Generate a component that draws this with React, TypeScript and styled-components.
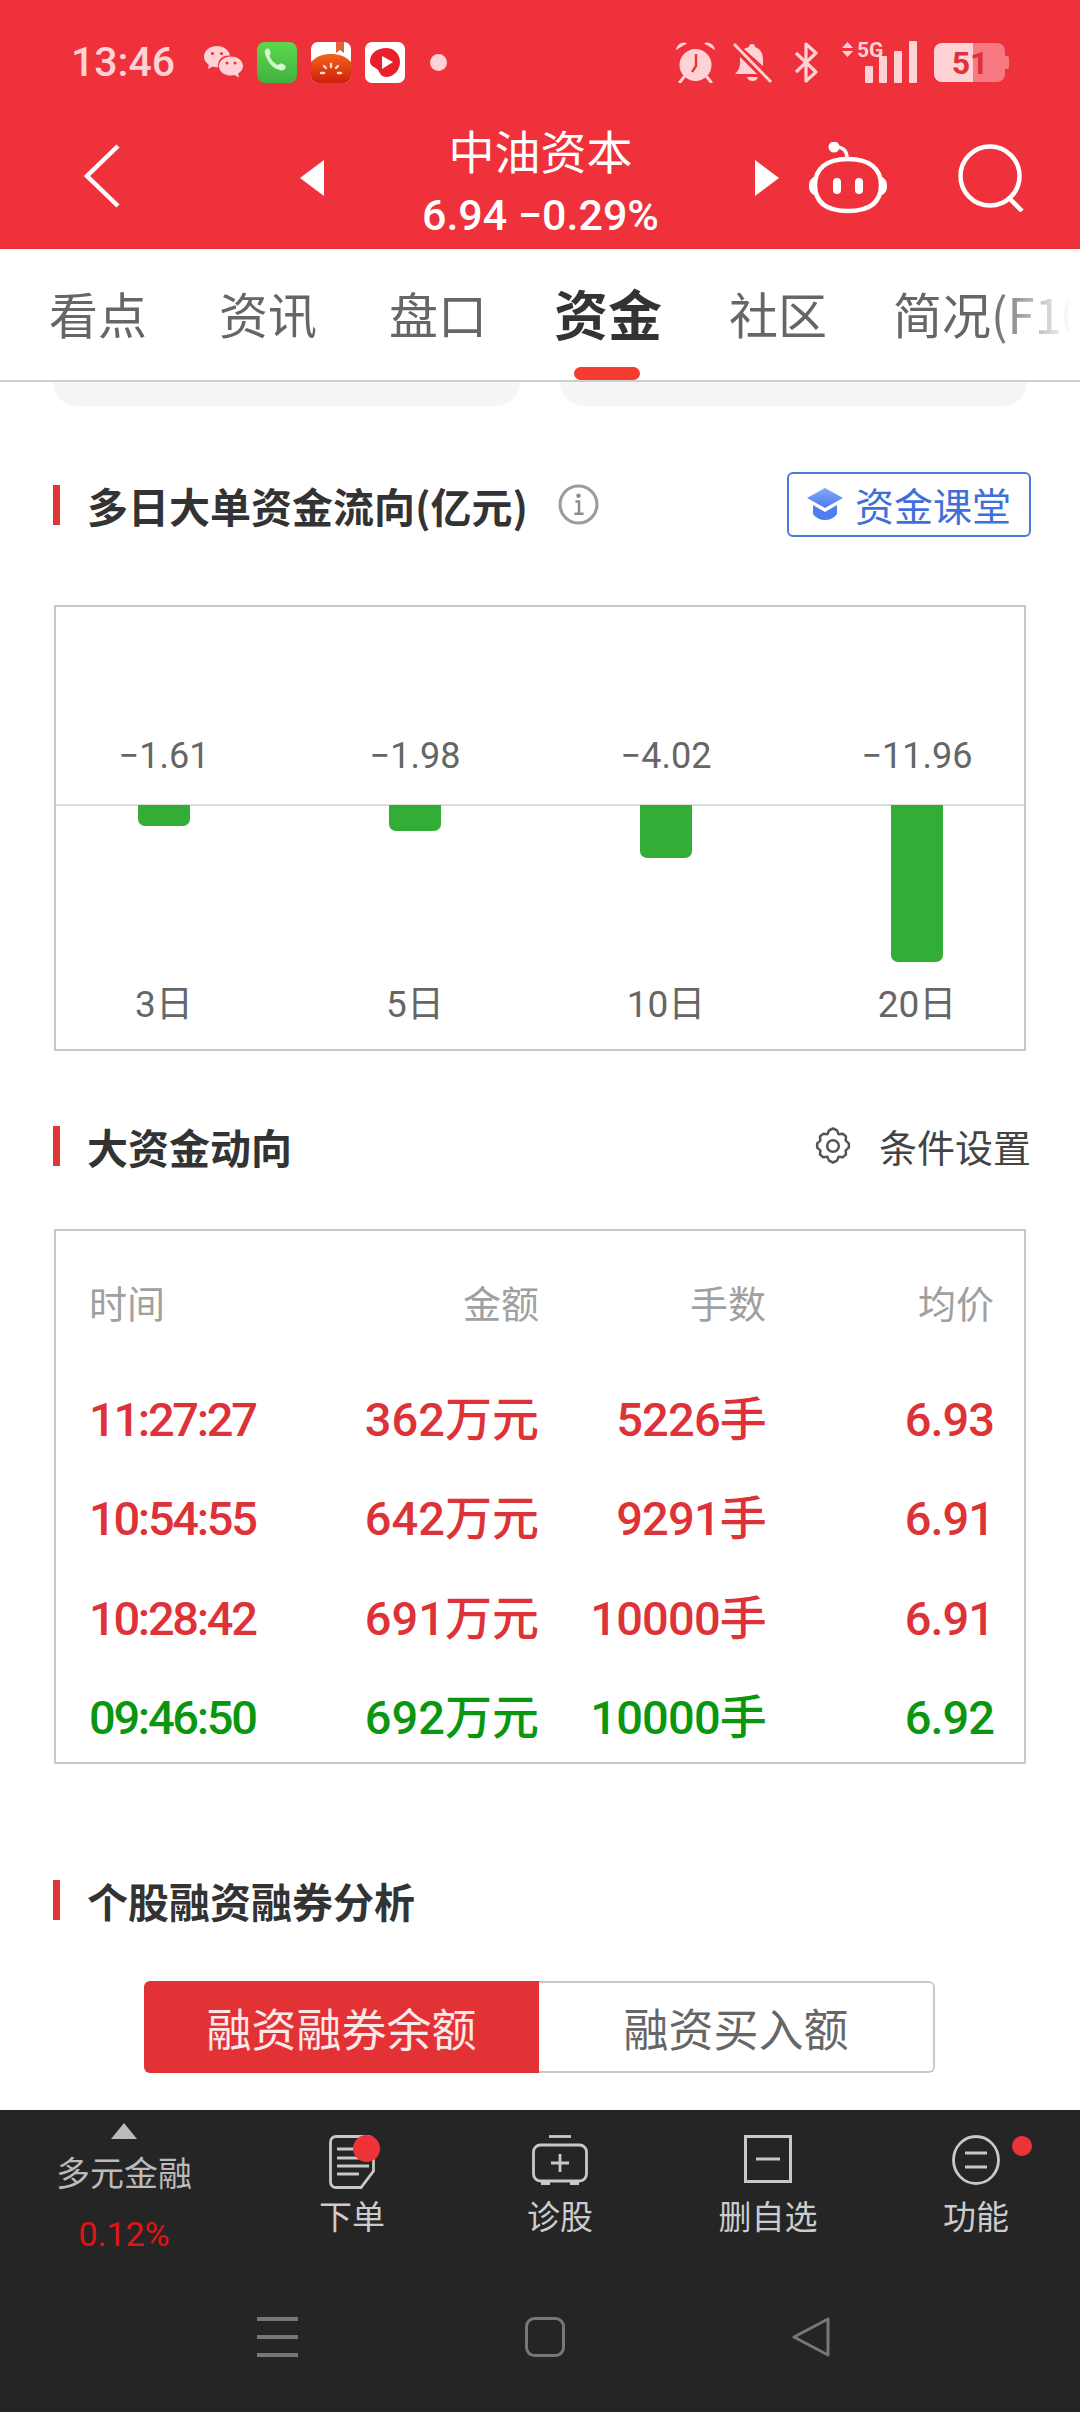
import React from 'react'
import styled, { createGlobalStyle } from 'styled-components'

const SANS = `"Noto Sans CJK SC", sans-serif`
const NUM = `Roboto, "Noto Sans CJK SC", sans-serif`
const RED = '#ef313c'
const PINK = '#ffd3d6'

const GlobalStyle = createGlobalStyle`
  html, body {
    margin: 0;
    padding: 0;
    background: #fff;
    font-family: ${SANS};
  }
`

const Page = styled.div`
  width: 1080px;
  height: 2412px;
  display: flex;
  flex-direction: column;
  overflow: hidden;
  background: #fff;
`

const Header = styled.header`
  height: 249px;
  flex: none;
  background: ${RED};
  display: flex;
  flex-direction: column;
`

const StatusBar = styled.div`
  height: 124px;
  flex: none;
  display: flex;
  align-items: center;
  justify-content: space-between;
  padding: 0 71px 0 71px;
`

const StatusGroup = styled.div`
  display: flex;
  align-items: center;
`

const StatusSlot = styled.span<{ $gap: number; $lift?: number }>`
  display: flex;
  margin-left: ${({ $gap }) => $gap}px;
  margin-bottom: ${({ $lift }) => $lift || 0}px;
`

const Clock = styled.span`
  font: 500 41px/1 ${NUM};
  color: ${PINK};
  width: 103px;
  margin-right: 30px;
  white-space: nowrap;
`

const AppIcons = styled.div`
  display: flex;
  align-items: center;
  gap: 14px;
`

const NotifyDot = styled.span`
  width: 17px;
  height: 17px;
  border-radius: 50%;
  background: ${PINK};
  margin-left: 25px;
`

const NavRow = styled.div`
  flex: 1;
  min-height: 0;
  display: flex;
  align-items: flex-start;
  padding: 20px 0 0 84px;
`

const BackButton = styled.div`
  margin-right: 180px;
  display: flex;
`

const StockSwitch = styled.div`
  display: flex;
  align-items: center;
  width: 479px;
  height: 114px;
  margin-top: -23px;
`

const StockInfo = styled.div`
  flex: 1;
  margin-left: 2px;
  padding-top: 5px;
  display: flex;
  flex-direction: column;
  align-items: center;
  color: #fff;
`

const StockName = styled.div`
  font: 400 46px/62px ${SANS};
  color: #fff;
`

const StockQuote = styled.div`
  font: 500 43px/56px ${NUM};
  color: #fff;
  margin-top: 7px;
  white-space: nowrap;
`

const NavAction = styled.div<{ $gap: number; $top: number }>`
  margin-left: ${({ $gap }) => $gap}px;
  margin-top: ${({ $top }) => $top}px;
  display: flex;
`

const Tabs = styled.nav`
  height: 133px;
  flex: none;
  box-sizing: border-box;
  border-bottom: 2px solid #cfcfcf;
  display: flex;
  gap: 72px;
  padding: 33px 0 0 49px;
  position: relative;
  overflow: hidden;
  white-space: nowrap;
`

const Tab = styled.div<{ $active?: boolean; $last?: boolean }>`
  position: relative;
  height: 98px;
  font-size: ${({ $active }) => ($active ? 54 : 49)}px;
  line-height: 62px;
  font-weight: ${({ $active }) => ($active ? 700 : 400)};
  color: ${({ $active }) => ($active ? '#333' : '#666')};
  margin: 0 ${({ $active }) => ($active ? -5 : 0)}px 0 ${({ $active, $last }) => ($active ? -5 : $last ? -6 : 0)}px;
`

const TabMark = styled.span`
  position: absolute;
  left: 20px;
  bottom: 0;
  width: 66px;
  height: 13px;
  border-radius: 7px;
  background: #f53a30;
`

const TabFade = styled.div`
  position: absolute;
  top: 0;
  bottom: 0;
  right: 0;
  width: 90px;
  background: linear-gradient(to right, rgba(255, 255, 255, 0), #fff 90%);
`

const Main = styled.main`
  flex: 1;
  min-height: 0;
  display: flex;
  flex-direction: column;
`

const StubRow = styled.div`
  display: flex;
  gap: 40px;
  padding: 0 53px 0 53px;
`

const StubCard = styled.div`
  flex: 1;
  height: 24px;
  background: #f5f5f5;
  border-radius: 0 0 24px 24px;
`

const SectionHead = styled.div<{ $top: number; $height: number }>`
  margin-top: ${({ $top }) => $top}px;
  height: ${({ $height }) => $height}px;
  flex: none;
  display: flex;
  align-items: center;
  justify-content: space-between;
  padding: 0 49px 0 53px;
`

const TitleWrap = styled.div`
  display: flex;
  align-items: center;
`

const TitleBar = styled.span`
  width: 7px;
  height: 40px;
  background: #e0363a;
  margin-right: 27px;
`

const Title = styled.h2`
  margin: 0;
  font: 700 41px/40px ${SANS};
  color: #333;
`

const InfoIcon = styled.span`
  display: flex;
  margin-left: 30px;
`

const CourseButton = styled.div`
  width: 244px;
  height: 65px;
  box-sizing: border-box;
  border: 2px solid #4f79d9;
  border-radius: 6px;
  display: flex;
  align-items: center;
  padding-left: 18px;
  gap: 12px;
  font-size: 39px;
  line-height: 1;
  color: #3f70da;
  white-space: nowrap;
`

const SettingLink = styled.div`
  display: flex;
  align-items: center;
  gap: 26px;
  font-size: 38px;
  line-height: 1;
  color: #444;
`

const ChartBox = styled.div`
  margin: 68px 54px 0;
  height: 446px;
  flex: none;
  box-sizing: border-box;
  border: 2px solid #c8c8c8;
  display: flex;
  flex-direction: column;
`

const ChartRow = styled.div<{ $height: number; $divider?: boolean }>`
  height: ${({ $height }) => $height}px;
  flex: none;
  box-sizing: border-box;
  display: grid;
  grid-template-columns: repeat(4, 200px);
  column-gap: 51px;
  padding-left: 8px;
  align-items: ${({ $divider }) => ($divider ? 'start' : 'end')};
  justify-items: center;
  border-top: ${({ $divider }) => ($divider ? '2px solid #ddd' : 'none')};
  margin-top: ${({ $divider }) => ($divider ? -1 : 0)}px;
`

const BarValue = styled.div`
  font: 400 36px/50px ${NUM};
  color: #666;
  padding-bottom: 24px;
  white-space: nowrap;
`

const Bar = styled.div<{ $height: number }>`
  width: 52px;
  height: ${({ $height }) => $height}px;
  background: #32ad36;
  border-radius: 0 0 7px 7px;
  margin-top: -1px;
`

const BarLabel = styled.div`
  font: 400 37px/50px ${NUM};
  color: #666;
  white-space: nowrap;
  margin-bottom: -3px;
`

const TableBox = styled.div`
  margin: 63px 54px 0;
  height: 535px;
  flex: none;
  box-sizing: border-box;
  border: 2px solid #c8c8c8;
  padding: 49px 30px 0 33px;
`

const TableRow = styled.div<{ $head?: boolean; $color?: string }>`
  display: grid;
  grid-template-columns: 201px 249px 227px 228px;
  align-items: center;
  height: ${({ $head }) => ($head ? 50 : 99.3)}px;
  margin-bottom: ${({ $head }) => ($head ? 40 : 0)}px;
  font: ${({ $head }) => ($head ? '400 38px' : '500 47px')}/1 ${NUM};
  color: ${({ $head, $color }) => ($head ? '#a0a0a0' : $color)};
  white-space: nowrap;
`

const Cell = styled.div<{ $left?: boolean; $tight?: number }>`
  text-align: ${({ $left }) => ($left ? 'left' : 'right')};
  letter-spacing: ${({ $tight }) => $tight || 0}px;
`

const Segment = styled.div`
  margin: 61px 145px 0 144px;
  height: 92px;
  flex: none;
  display: flex;
  border-radius: 6px;
  overflow: hidden;
`

const SegmentItem = styled.div<{ $active?: boolean }>`
  box-sizing: border-box;
  flex: ${({ $active }) => ($active ? '0 0 395px' : '1')};
  display: flex;
  align-items: center;
  justify-content: center;
  font-size: 45px;
  line-height: 1;
  color: ${({ $active }) => ($active ? '#fde8e8' : '#666')};
  background: ${({ $active }) => ($active ? '#e33236' : '#fff')};
  border: ${({ $active }) => ($active ? 'none' : '2px solid #c8c8c8')};
  border-left: none;
  border-radius: ${({ $active }) => ($active ? '0' : '0 6px 6px 0')};
`

const Footer = styled.footer`
  height: 302px;
  flex: none;
  background: #252525;
  display: flex;
  flex-direction: column;
`

const ActionRow = styled.div`
  height: 180px;
  flex: none;
  display: grid;
  grid-template-columns: 248px repeat(4, 208px);
`

const FinanceCell = styled.div`
  display: flex;
  flex-direction: column;
  align-items: center;
  padding-top: 13px;
  white-space: nowrap;
`

const FinanceLabel = styled.div`
  font-size: 34px;
  line-height: 44px;
  color: #bbb;
  margin-top: 11px;
`

const FinancePct = styled.div`
  font: 400 34px/44px ${NUM};
  color: #e01414;
  margin-top: 18px;
`

const ActionItem = styled.div`
  display: flex;
  flex-direction: column;
  align-items: center;
  padding-top: 25px;
`

const ActionIcon = styled.div`
  position: relative;
  height: 56px;
  display: flex;
  align-items: flex-start;
  justify-content: center;
`

const Badge = styled.span<{ $right: number; $top: number; $size: number }>`
  position: absolute;
  right: ${({ $right }) => $right}px;
  top: ${({ $top }) => $top}px;
  width: ${({ $size }) => $size}px;
  height: ${({ $size }) => $size}px;
  border-radius: 50%;
  background: #ee3338;
`

const ActionLabel = styled.div`
  font-size: 33px;
  line-height: 44px;
  color: #ccc;
  margin-top: 2px;
  white-space: nowrap;
`

const SystemNav = styled.div`
  display: flex;
  align-items: center;
  padding: 27px 0 0 257px;
`

const SystemKey = styled.div<{ $gap: number }>`
  margin-left: ${({ $gap }) => $gap}px;
  display: flex;
`

const WeChatIcon = () => (
  <svg width="39" height="32" viewBox="0 0 39 32" fill={PINK}>
    <path d="M13 0C6 0 0 4.6 0 10.6c0 3.4 1.9 6.2 4.8 8.2L4 23l4.6-2.4c1.3.4 2.7.6 4.4.6 1 0 1.3-.2 1.3-.2C13 14 18 9 26 9.500 25 4 19.500 0 13 0z" />
    <path d="M27 10.500c-6.600 0-12 4.200-12 9.700s5.400 9.300 12 9.300c1.300 0 2.500-.2 3.600-.5l4.400 2.500-.9-4c3-1.800 4.900-4.500 4.900-7.300 0-5.500-5.400-9.700-12-9.700z" />
    <g fill={RED}>
      <circle cx="8.500" cy="7.500" r="1.600" />
      <circle cx="17.500" cy="7.500" r="1.600" />
      <circle cx="23" cy="17" r="1.500" />
      <circle cx="31" cy="17" r="1.500" />
    </g>
  </svg>
)

const PhoneIcon = () => (
  <svg width="40" height="41" viewBox="0 0 40 41">
    <defs>
      <linearGradient id="phoneBg" x1="0" y1="0" x2="0" y2="1">
        <stop offset="0" stopColor="#5ed84f" />
        <stop offset="1" stopColor="#3fb13f" />
      </linearGradient>
    </defs>
    <rect width="40" height="41" rx="8" fill="url(#phoneBg)" />
    <path
      d="M8 11c-1-2 1-4.500 3-4.500 1 0 1.600 1 2.400 3 .6 1.500.4 2.300-.6 3.200-.5.5-.5 1 0 2 1.500 3.200 4 6 7 7.800 1 .5 1.500.4 2-.1 1-1 2.200-1.300 3.600-.6 2 1 3.600 2 3.400 3.400-.3 2-3 3.800-5.300 3.100C15 26.500 10 19 8 11z"
      fill="#d8f8d0"
    />
  </svg>
)

const TomatoIcon = () => (
  <svg width="40" height="41" viewBox="0 0 40 41">
    <defs>
      <linearGradient id="tomatoBg" x1="0" y1="0" x2="0" y2="1">
        <stop offset="0" stopColor="#f2641c" />
        <stop offset="1" stopColor="#cf1f0c" />
      </linearGradient>
      <clipPath id="tomatoClip">
        <rect width="40" height="41" rx="7" />
      </clipPath>
    </defs>
    <g clipPath="url(#tomatoClip)">
      <rect width="40" height="41" fill="#fff" />
      <path d="M0 20C6 14 12 12 20 12s14 2 20 8v21H0z" fill="url(#tomatoBg)" />
      <path d="M25 0h8v11l-4-3-4 3z" fill="#e2623d" />
    </g>
    <g stroke="#ffe3c8" strokeWidth="2.400" strokeLinecap="round">
      <path d="M10 31h3" />
      <path d="M13 24l2 2" />
      <path d="M20 22v3" />
      <path d="M27 24l-2 2" />
      <path d="M30 31h-3" />
    </g>
  </svg>
)

const VideoIcon = () => (
  <svg width="40" height="41" viewBox="0 0 40 41">
    <rect width="40" height="41" rx="7" fill="#fff" />
    <path
      d="M21 6c8 0 14 6 14 14s-6 15-14 15c-5 0-6-4-8-7-2-3-8-3-8-9C5 11 13 6 21 6z"
      fill="#e9202c"
    />
    <path d="M17 14l11 6-11 7z" fill="#fff" />
  </svg>
)

const AlarmIcon = () => (
  <svg width="41" height="42" viewBox="0 0 41 42" fill={PINK}>
    <circle cx="20.500" cy="24" r="16" />
    <path d="M1 9C2 3 8 0 12 2.500zM40 9C39 3 33 0 29 2.500z" />
    <path d="M9 36l-4 5M32 36l4 5" stroke={PINK} strokeWidth="3" strokeLinecap="round" />
    <path d="M21 13v12l-4 6" fill="none" stroke={RED} strokeWidth="2.400" />
  </svg>
)

const BellOffIcon = () => (
  <svg width="40" height="41" viewBox="0 0 40 41" fill={PINK}>
    <path d="M19 2a3 3 0 0 1 3 3c6 2 8 7 8 13v6L11 7c2-1 4-2 5-2a3 3 0 0 1 3-3z" />
    <path d="M7 15l17 17H2c3-3 5-6 5-11z" />
    <path d="M14 35h11c-1 3-3 4-5.500 4S15 38 14 35z" />
    <path d="M1 2l37 38" stroke={PINK} strokeWidth="2.800" />
  </svg>
)

const BluetoothIcon = () => (
  <svg width="24" height="41" viewBox="0 0 24 41" fill="none" stroke={PINK} strokeWidth="3.200" strokeLinejoin="round">
    <path d="M2 11l20 19-10 9V2l10 9L2 30" />
  </svg>
)

const SignalIcon = () => (
  <svg width="75" height="47" viewBox="0 -5 75 47" fill={PINK}>
    <path d="M0 7l5.500-6 5.500 6zM0 10l5.500 6 5.500-6z" />
    <text x="15" y="16" fontFamily="Roboto, sans-serif" fontWeight="700" fontSize="21" fill={PINK}>
      5G
    </text>
    <rect x="23" y="25" width="8" height="17" rx="1" />
    <rect x="37" y="15" width="8" height="27" rx="1" />
    <rect x="52" y="10" width="8" height="32" rx="1" />
    <rect x="67" y="0" width="8" height="42" rx="1" />
  </svg>
)

const BatteryIcon = () => (
  <svg width="75" height="39" viewBox="0 0 75 39">
    <path d="M8 0h31v39H8a8 8 0 0 1-8-8V8a8 8 0 0 1 8-8z" fill={PINK} />
    <path d="M39 0h24a8 8 0 0 1 8 8v23a8 8 0 0 1-8 8H39z" fill="#f77a82" />
    <path d="M71 13h2a2 2 0 0 1 2 2v9a2 2 0 0 1-2 2h-2z" fill="#f77a82" />
    <text x="36" y="31" textAnchor="middle" fontFamily="Roboto, sans-serif" fontWeight="700" fontSize="32" fill="#e2303a">
      51
    </text>
  </svg>
)

const ChevronLeft = () => (
  <svg width="36" height="64" viewBox="0 0 36 64" fill="none" stroke="#fff" strokeWidth="4.500">
    <path d="M34 2L3 32l31 30" />
  </svg>
)

const TriangleLeft = () => (
  <svg width="24" height="36" viewBox="0 0 24 36" fill="#fff">
    <path d="M24 0v36L0 18z" />
  </svg>
)

const TriangleRight = () => (
  <svg width="24" height="36" viewBox="0 0 24 36" fill="#fff">
    <path d="M0 0v36l24-18z" />
  </svg>
)

const RobotIcon = () => (
  <svg width="78" height="72" viewBox="0 0 78 72" fill="none">
    <circle cx="25" cy="5" r="5.500" fill="#fff" />
    <path d="M27 5c8 0 11 5 11 11" stroke="#fff" strokeWidth="3.500" />
    <path d="M39 17c22 0 33 10 33 26 0 17-11 26-33 26S6 60 6 43c0-16 11-26 33-26z" stroke="#fff" strokeWidth="4.500" />
    <path d="M5 35C1 37 0 40 0 44s1 7 5 9zM73 35c4 2 5 5 5 9s-1 7-5 9z" fill="#fff" />
    <rect x="24" y="36" width="8" height="16" rx="4" fill="#fff" />
    <rect x="46" y="36" width="8" height="16" rx="4" fill="#fff" />
  </svg>
)

const SearchIcon = () => (
  <svg width="66" height="68" viewBox="0 0 66 68" fill="none" stroke="#fff" strokeWidth="4.500">
    <circle cx="32" cy="32" r="29.500" />
    <path d="M52 55l12 12" />
  </svg>
)

const InfoGlyph = () => (
  <svg width="41" height="41" viewBox="0 0 40 40" fill="none">
    <circle cx="20" cy="20" r="18" stroke="#9c9c9c" strokeWidth="3" />
    <circle cx="20" cy="11.500" r="2.200" fill="#8c8c8c" />
    <path d="M17 17h3.500v12M16 29h9" stroke="#8c8c8c" strokeWidth="2.400" />
  </svg>
)

const CapIcon = () => (
  <svg width="36" height="33" viewBox="0 0 36 33">
    <defs>
      <linearGradient id="capBg" x1="0" y1="0" x2="0" y2="1">
        <stop offset="0" stopColor="#86a8f8" />
        <stop offset="1" stopColor="#4b7bf0" />
      </linearGradient>
    </defs>
    <path d="M18 0l18 10-18 10L0 10z" fill="url(#capBg)" />
    <path d="M6 17l12 7 12-7v9c-3 4-7 6-12 6s-9-2-12-6z" fill="#4f7fef" />
  </svg>
)

const GearIcon = () => (
  <svg width="40" height="40" viewBox="0 0 24 24" fill="none" stroke="#555" strokeWidth="1.500" strokeLinejoin="round">
    <path d="M12 1.500l2.400 1.100.9 2.300 2.500-.3 2 1.700-.2 2.500 1.900 1.600v2.600l-1.900 1.600.2 2.500-2 1.700-2.500-.3-.9 2.300-2.400 1.100-2.400-1.100-.9-2.300-2.500.3-2-1.700.2-2.500-1.900-1.600v-2.600l1.900-1.600-.2-2.500 2-1.700 2.500.3.9-2.300z" />
    <circle cx="12" cy="12" r="3.500" />
  </svg>
)

const OrderIcon = () => (
  <svg width="46" height="54" viewBox="0 0 46 54" fill="none" stroke="#c8c8c8" strokeWidth="2.800">
    <path d="M7 1.500h32a5 5 0 0 1 5.500 5V36L32 52.500H7A5.500 5.500 0 0 1 1.500 47V7A5.500 5.500 0 0 1 7 1.500z" />
    <path d="M8 14h26M8 23h26M8 31h32M8 39h22" />
  </svg>
)

const DiagnoseIcon = () => (
  <svg width="56" height="50" viewBox="0 0 56 50" fill="none" stroke="#c8c8c8" strokeWidth="2.800">
    <path d="M17 1.500h22" />
    <rect x="1.500" y="10" width="53" height="36" rx="7" />
    <path d="M28 19v18M19 28h18" />
    <path d="M9 48h9M38 48h9" strokeWidth="4" />
  </svg>
)

const RemoveIcon = () => (
  <svg width="48" height="48" viewBox="0 0 48 48" fill="none" stroke="#c8c8c8" strokeWidth="3">
    <rect x="1.500" y="1.500" width="45" height="45" />
    <path d="M12 24h24" />
  </svg>
)

const MenuCircleIcon = () => (
  <svg width="48" height="50" viewBox="0 0 48 50" fill="none" stroke="#c8c8c8" strokeWidth="2.800">
    <ellipse cx="24" cy="25" rx="22.500" ry="23.500" />
    <path d="M13 18h22M13 32h22" />
  </svg>
)

const NavMenu = () => (
  <svg width="41" height="40" viewBox="0 0 41 40" fill="#777">
    <rect y="0" width="41" height="4" />
    <rect y="18" width="41" height="4" />
    <rect y="36" width="41" height="4" />
  </svg>
)

const NavHome = () => (
  <svg width="40" height="40" viewBox="0 0 40 40" fill="none" stroke="#777" strokeWidth="3">
    <rect x="1.500" y="1.500" width="37" height="37" rx="8" />
  </svg>
)

const NavBack = () => (
  <svg width="38" height="40" viewBox="0 0 38 40" fill="none" stroke="#777" strokeWidth="3" strokeLinejoin="round">
    <path d="M36 2v36L2 20z" />
  </svg>
)

const TABS = ['看点', '资讯', '盘口', '资金', '社区', '简况(F10)']

const FLOWS = [
  { value: '−1.61', label: '3日', height: 21 },
  { value: '−1.98', label: '5日', height: 26 },
  { value: '−4.02', label: '10日', height: 53 },
  { value: '−11.96', label: '20日', height: 157 },
]

const UP = '#dd3338'
const DOWN = '#0a960f'

const TRADES = [
  { time: '11:27:27', amount: '362万元', hands: '5226手', price: '6.93', color: UP },
  { time: '10:54:55', amount: '642万元', hands: '9291手', price: '6.91', color: UP },
  { time: '10:28:42', amount: '691万元', hands: '10000手', price: '6.91', color: UP },
  { time: '09:46:50', amount: '692万元', hands: '10000手', price: '6.92', color: DOWN },
]

export default function App() {
  return (
    <Page>
      <GlobalStyle />
      <Header>
        <StatusBar>
          <StatusGroup>
            <Clock>13:46</Clock>
            <AppIcons>
              <WeChatIcon />
              <PhoneIcon />
              <TomatoIcon />
              <VideoIcon />
            </AppIcons>
            <NotifyDot />
          </StatusGroup>
          <StatusGroup>
            <StatusSlot $gap={0}>
              <AlarmIcon />
            </StatusSlot>
            <StatusSlot $gap={17}>
              <BellOffIcon />
            </StatusSlot>
            <StatusSlot $gap={21}>
              <BluetoothIcon />
            </StatusSlot>
            <StatusSlot $gap={24} $lift={5}>
              <SignalIcon />
            </StatusSlot>
            <StatusSlot $gap={17}>
              <BatteryIcon />
            </StatusSlot>
          </StatusGroup>
        </StatusBar>
        <NavRow>
          <BackButton>
            <ChevronLeft />
          </BackButton>
          <StockSwitch>
            <TriangleLeft />
            <StockInfo>
              <StockName>中油资本</StockName>
              <StockQuote>6.94 −0.29%</StockQuote>
            </StockInfo>
            <TriangleRight />
          </StockSwitch>
          <NavAction $gap={30} $top={-2}>
            <RobotIcon />
          </NavAction>
          <NavAction $gap={71} $top={0}>
            <SearchIcon />
          </NavAction>
        </NavRow>
      </Header>

      <Tabs>
        {TABS.map((tab, i) => (
          <Tab key={tab} $active={tab === '资金'} $last={i === TABS.length - 1}>
            {tab}
            {tab === '资金' && <TabMark />}
          </Tab>
        ))}
        <TabFade />
      </Tabs>

      <Main>
        <StubRow>
          <StubCard />
          <StubCard />
        </StubRow>

        <SectionHead $top={66} $height={65}>
          <TitleWrap>
            <TitleBar />
            <Title>多日大单资金流向(亿元)</Title>
            <InfoIcon>
              <InfoGlyph />
            </InfoIcon>
          </TitleWrap>
          <CourseButton>
            <CapIcon />
            资金课堂
          </CourseButton>
        </SectionHead>

        <ChartBox>
          <ChartRow $height={198}>
            {FLOWS.map((f) => (
              <BarValue key={f.label}>{f.value}</BarValue>
            ))}
          </ChartRow>
          <ChartRow $height={173} $divider>
            {FLOWS.map((f) => (
              <Bar key={f.label} $height={f.height} />
            ))}
          </ChartRow>
          <ChartRow $height={50}>
            {FLOWS.map((f) => (
              <BarLabel key={f.label}>{f.label}</BarLabel>
            ))}
          </ChartRow>
        </ChartBox>

        <SectionHead $top={75} $height={40}>
          <TitleWrap>
            <TitleBar />
            <Title>大资金动向</Title>
          </TitleWrap>
          <SettingLink>
            <GearIcon />
            条件设置
          </SettingLink>
        </SectionHead>

        <TableBox>
          <TableRow $head>
            <Cell $left>时间</Cell>
            <Cell>金额</Cell>
            <Cell>手数</Cell>
            <Cell>均价</Cell>
          </TableRow>
          {TRADES.map((t) => (
            <TableRow key={t.time} $color={t.color}>
              <Cell $left $tight={-2.3}>
                {t.time}
              </Cell>
              <Cell>{t.amount}</Cell>
              <Cell $tight={-0.8}>{t.hands}</Cell>
              <Cell $tight={-1}>{t.price}</Cell>
            </TableRow>
          ))}
        </TableBox>

        <SectionHead $top={116} $height={40}>
          <TitleWrap>
            <TitleBar />
            <Title>个股融资融券分析</Title>
          </TitleWrap>
        </SectionHead>

        <Segment>
          <SegmentItem $active>融资融券余额</SegmentItem>
          <SegmentItem>融资买入额</SegmentItem>
        </Segment>
      </Main>

      <Footer>
        <ActionRow>
          <FinanceCell>
            <svg width="26" height="16" viewBox="0 0 26 16" fill="#bbb">
              <path d="M13 0l13 16H0z" />
            </svg>
            <FinanceLabel>多元金融</FinanceLabel>
            <FinancePct>0.12%</FinancePct>
          </FinanceCell>
          <ActionItem>
            <ActionIcon>
              <OrderIcon />
              <Badge $right={-5} $top={0} $size={27} />
            </ActionIcon>
            <ActionLabel>下单</ActionLabel>
          </ActionItem>
          <ActionItem>
            <ActionIcon>
              <DiagnoseIcon />
            </ActionIcon>
            <ActionLabel>诊股</ActionLabel>
          </ActionItem>
          <ActionItem>
            <ActionIcon>
              <RemoveIcon />
            </ActionIcon>
            <ActionLabel>删自选</ActionLabel>
          </ActionItem>
          <ActionItem>
            <ActionIcon>
              <MenuCircleIcon />
              <Badge $right={-32} $top={1} $size={20} />
            </ActionIcon>
            <ActionLabel>功能</ActionLabel>
          </ActionItem>
        </ActionRow>
        <SystemNav>
          <NavMenu />
          <SystemKey $gap={227}>
            <NavHome />
          </SystemKey>
          <SystemKey $gap={227}>
            <NavBack />
          </SystemKey>
        </SystemNav>
      </Footer>
    </Page>
  )
}
